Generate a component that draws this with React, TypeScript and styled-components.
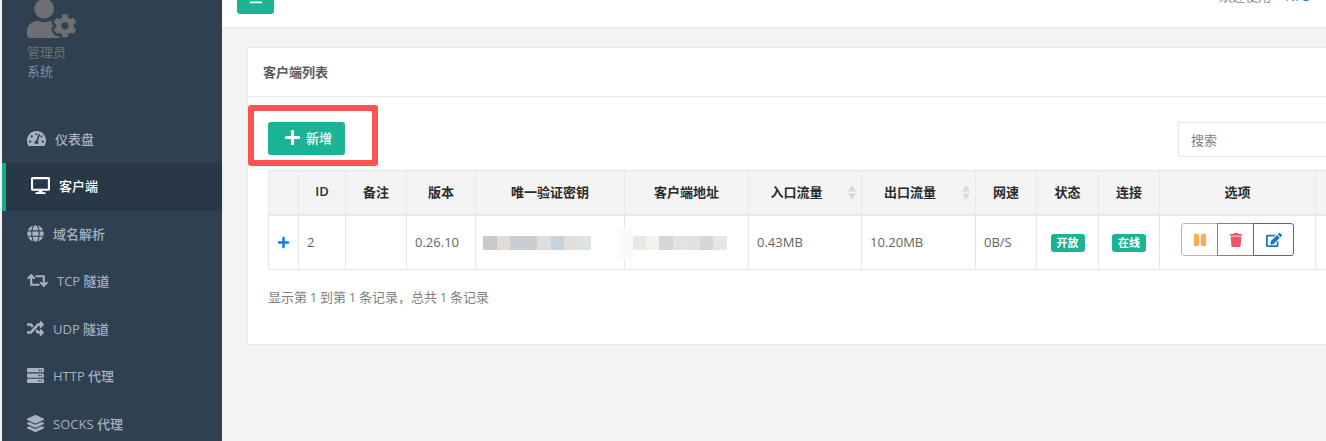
import React from 'react'
import styled, { createGlobalStyle } from 'styled-components'
import {
  FaBars,
  FaDesktop,
  FaEdit,
  FaGlobe,
  FaLayerGroup,
  FaPause,
  FaPlus,
  FaRandom,
  FaRetweet,
  FaServer,
  FaTachometerAlt,
  FaTrash,
  FaUserCog,
} from 'react-icons/fa'

const GlobalStyle = createGlobalStyle`
  * { box-sizing: border-box; }
  html, body {
    margin: 0;
    width: 1326px;
    height: 441px;
    overflow: hidden;
    background: #f3f3f4;
    font-family: "Open Sans", "Noto Sans CJK SC", sans-serif;
    font-size: 13px;
    color: #676a6c;
  }
`

const Page = styled.div`
  display: flex;
  width: 1326px;
  height: 441px;
  padding-left: 2px;
  overflow: hidden;
`

const Sidebar = styled.aside`
  flex: 0 0 220px;
  height: 441px;
  background: #2f4050;
  overflow: hidden;
`

const Profile = styled.div`
  display: flow-root;
  height: 115.5px;
  padding-left: 25px;
  font-size: 13px;
  line-height: 19px;
  svg {
    display: block;
    margin: -6px 0 0;
    color: #6d6f71;
  }
`

const ProfileName = styled.div`
  color: #6f7173;
`

const ProfileRole = styled.div`
  color: #7b8ea3;
`

const NavItem = styled.div<{ $active?: boolean; $iconSize: number }>`
  display: flex;
  align-items: center;
  gap: 9px;
  height: 47.5px;
  padding: 0 0 2px 25px;
  border-left: ${props => (props.$active ? '4px solid #19aa8d' : 'none')};
  background: ${props => (props.$active ? '#293846' : 'transparent')};
  color: ${props => (props.$active ? '#ffffff' : '#a7b1c2')};
  font-weight: 500;
  font-size: 13px;
  svg {
    flex: none;
    font-size: ${props => props.$iconSize}px;
  }
`

const Main = styled.main`
  flex: 1;
  min-width: 0;
  overflow: hidden;
`

const TopBar = styled.header`
  display: flex;
  justify-content: space-between;
  height: 28px;
  padding: 0 0 0 15px;
  background: #ffffff;
  border-bottom: 1px solid #e7eaec;
`

const ToggleButton = styled.button`
  display: flex;
  align-items: center;
  justify-content: center;
  width: 37px;
  height: 33px;
  margin-top: -19px;
  padding: 0;
  border: none;
  border-radius: 3px;
  background: #1ab394;
  color: #ffffff;
  font-size: 14px;
`

const Welcome = styled.div`
  margin-top: -14px;
  padding-right: 16px;
  line-height: 20px;
  color: #888888;
  white-space: nowrap;
  b {
    margin-left: 14px;
    font-weight: 400;
    color: #1c84e6;
  }
`

const Content = styled.div`
  padding: 19px 0 0 25px;
`

const Card = styled.section`
  position: relative;
  width: 1200px;
  height: 298px;
  background: #ffffff;
  border: 1px solid #e7eaec;
  border-right: none;
`

const CardTitle = styled.div`
  height: 49px;
  padding-left: 15px;
  border-bottom: 1px solid #e7eaec;
  line-height: 48px;
  font-weight: 600;
  color: #5a5c5e;
`

const CardBody = styled.div`
  padding: 25px 0 0 20px;
`

const Toolbar = styled.div`
  display: flex;
  justify-content: space-between;
  align-items: flex-start;
  height: 48px;
`

const AddButton = styled.button`
  display: flex;
  align-items: center;
  gap: 5px;
  width: 77px;
  height: 33px;
  padding: 0 0 2px 16px;
  border: none;
  border-radius: 3px;
  background: #1ab394;
  color: #ffffff;
  font-family: inherit;
  font-size: 13px;
  font-weight: 500;
  svg {
    font-size: 17px;
  }
`

const SearchInput = styled.input`
  width: 269px;
  height: 35px;
  padding: 0 12px;
  border: 1px solid #e5e6e7;
  border-radius: 1px;
  font-family: inherit;
  font-size: 13px;
  &::placeholder {
    color: #808285;
  }
`

const Highlight = styled.div`
  position: absolute;
  left: 0;
  top: 57px;
  width: 130px;
  height: 61px;
  border: 6px solid #fd5353;
  border-radius: 3px;
  pointer-events: none;
`

const Table = styled.table`
  table-layout: fixed;
  width: 1113px;
  border-collapse: collapse;
`

const HeadCell = styled.th<{ $sortable?: boolean }>`
  position: relative;
  height: 44px;
  padding: 0 ${props => (props.$sortable ? '17px' : '0')} 2px 0;
  background: #f4f4f4;
  border: 1px solid #e7e7e7;
  border-bottom-width: 2px;
  text-align: center;
  font-size: 13px;
  font-weight: 600;
  color: #2b2b2b;
`

const BodyCell = styled.td<{ $center?: boolean }>`
  position: relative;
  height: 55px;
  padding: 0 8px;
  border: 1px solid #e7e7e7;
  text-align: ${props => (props.$center ? 'center' : 'left')};
  color: #5f6468;
`

const SortMark = styled.svg`
  position: absolute;
  right: 5px;
  top: 14px;
`

const ExpandIcon = styled(FaPlus)`
  display: block;
  font-size: 13px;
  color: #0d7df2;
`

const Blurred = styled.div`
  display: flex;
  height: 14px;
  margin: 2px 0 0 -1px;
`

const BlurBlock = styled.span<{ $color: string }>`
  flex: 0 0 13.5px;
  background: ${props => props.$color};
`

const BlurEdge = styled.div`
  position: absolute;
  left: -6px;
  top: 13px;
  width: 14px;
  height: 30px;
  background: #fafafa;
`

const Badge = styled.span`
  display: inline-block;
  width: 34px;
  height: 18px;
  border-radius: 3px;
  background: #1ab394;
  color: #ffffff;
  line-height: 18px;
  font-size: 11px;
  font-weight: 700;
  text-align: center;
`

const ActionGroup = styled.div`
  display: flex;
  height: 33px;
  margin: -5px 0 0 13px;
`

const ActionButton = styled.button<{ $color: string; $width: number; $first?: boolean; $last?: boolean; $iconSize: number }>`
  display: flex;
  align-items: center;
  justify-content: center;
  flex: 0 0 ${props => props.$width}px;
  margin-left: ${props => (props.$first ? '0' : '-1px')};
  padding: 0;
  background: #ffffff;
  border: 1px solid ${props => props.$color};
  border-radius: ${props => (props.$first ? '3px 0 0 3px' : props.$last ? '0 3px 3px 0' : '0')};
  color: ${props => props.$color};
  font-size: ${props => props.$iconSize}px;
`

const Footer = styled.div`
  margin-top: 18px;
  line-height: 18px;
  word-spacing: -0.6px;
  color: #7d7f81;
`

const navItems = [
  { icon: <FaTachometerAlt />, iconSize: 19, label: '仪表盘' },
  { icon: <FaDesktop />, iconSize: 19, label: '客户端', active: true },
  { icon: <FaGlobe />, iconSize: 17, label: '域名解析' },
  { icon: <FaRetweet />, iconSize: 21, label: 'TCP 隧道' },
  { icon: <FaRandom />, iconSize: 17, label: 'UDP 隧道' },
  { icon: <FaServer />, iconSize: 17, label: 'HTTP 代理' },
  { icon: <FaLayerGroup />, iconSize: 17, label: 'SOCKS 代理' },
]

const columns = [
  { label: '', width: 30 },
  { label: 'ID', width: 47 },
  { label: '备注', width: 61 },
  { label: '版本', width: 69 },
  { label: '唯一验证密钥', width: 149 },
  { label: '客户端地址', width: 124 },
  { label: '入口流量', width: 113, sortable: true },
  { label: '出口流量', width: 114, sortable: true },
  { label: '网速', width: 61 },
  { label: '状态', width: 62 },
  { label: '连接', width: 61 },
  { label: '选项', width: 156 },
  { label: '', width: 66 },
]

const keyBlocks = ['#c9c9cb', '#e5dcd8', '#c8ced4', '#cdcdd0', '#dcdfdf', '#c6d2dc', '#e0dfdd', '#dde4e6']
const addressBlocks = ['#e6e8e8', '#f2f1ec', '#d6d6d6', '#e3e4e6', '#e0e1e3', '#d5d6d6', '#e6e6e6']

export default function App() {
  return (
    <Page>
      <GlobalStyle />

      <Sidebar>
        <Profile>
          <FaUserCog size={49} />
          <ProfileName>管理员</ProfileName>
          <ProfileRole>系统</ProfileRole>
        </Profile>
        {navItems.map(item => (
          <NavItem key={item.label} $active={item.active} $iconSize={item.iconSize}>
            {item.icon}
            <span>{item.label}</span>
          </NavItem>
        ))}
      </Sidebar>

      <Main>
        <TopBar>
          <ToggleButton>
            <FaBars />
          </ToggleButton>
          <Welcome>
            欢迎使用<b>NPS</b>
          </Welcome>
        </TopBar>

        <Content>
          <Card>
            <CardTitle>客户端列表</CardTitle>
            <Highlight />
            <CardBody>
              <Toolbar>
                <AddButton>
                  <FaPlus />
                  新增
                </AddButton>
                <SearchInput placeholder="搜索" />
              </Toolbar>

              <Table>
                <colgroup>
                  {columns.map((col, i) => (
                    <col key={i} width={col.width} />
                  ))}
                </colgroup>
                <thead>
                  <tr>
                    {columns.map((col, i) => (
                      <HeadCell key={i} $sortable={col.sortable}>
                        {col.label}
                        {col.sortable && (
                          <SortMark width="8" height="15" viewBox="0 0 8 15">
                            <path d="M4 0L8 6.5H0z M4 15L0 8.5H8z" fill="#d9d9d9" />
                          </SortMark>
                        )}
                      </HeadCell>
                    ))}
                  </tr>
                </thead>
                <tbody>
                  <tr>
                    <BodyCell>
                      <ExpandIcon />
                    </BodyCell>
                    <BodyCell>2</BodyCell>
                    <BodyCell />
                    <BodyCell>0.26.10</BodyCell>
                    <BodyCell>
                      <Blurred>
                        {keyBlocks.map((color, i) => (
                          <BlurBlock key={i} $color={color} />
                        ))}
                      </Blurred>
                    </BodyCell>
                    <BodyCell>
                      <BlurEdge />
                      <Blurred>
                        {addressBlocks.map((color, i) => (
                          <BlurBlock key={i} $color={color} />
                        ))}
                      </Blurred>
                    </BodyCell>
                    <BodyCell>0.43MB</BodyCell>
                    <BodyCell>10.20MB</BodyCell>
                    <BodyCell>0B/S</BodyCell>
                    <BodyCell $center>
                      <Badge>开放</Badge>
                    </BodyCell>
                    <BodyCell $center>
                      <Badge>在线</Badge>
                    </BodyCell>
                    <BodyCell>
                      <ActionGroup>
                        <ActionButton $color="#f8ac59" $first $width={37} $iconSize={14}>
                          <FaPause />
                        </ActionButton>
                        <ActionButton $color="#ed5565" $width={37} $iconSize={14}>
                          <FaTrash />
                        </ActionButton>
                        <ActionButton $color="#1c78c0" $last $width={41} $iconSize={16}>
                          <FaEdit />
                        </ActionButton>
                      </ActionGroup>
                    </BodyCell>
                    <BodyCell />
                  </tr>
                </tbody>
              </Table>

              <Footer>显示第 1 到第 1 条记录，总共 1 条记录</Footer>
            </CardBody>
          </Card>
        </Content>
      </Main>
    </Page>
  )
}
